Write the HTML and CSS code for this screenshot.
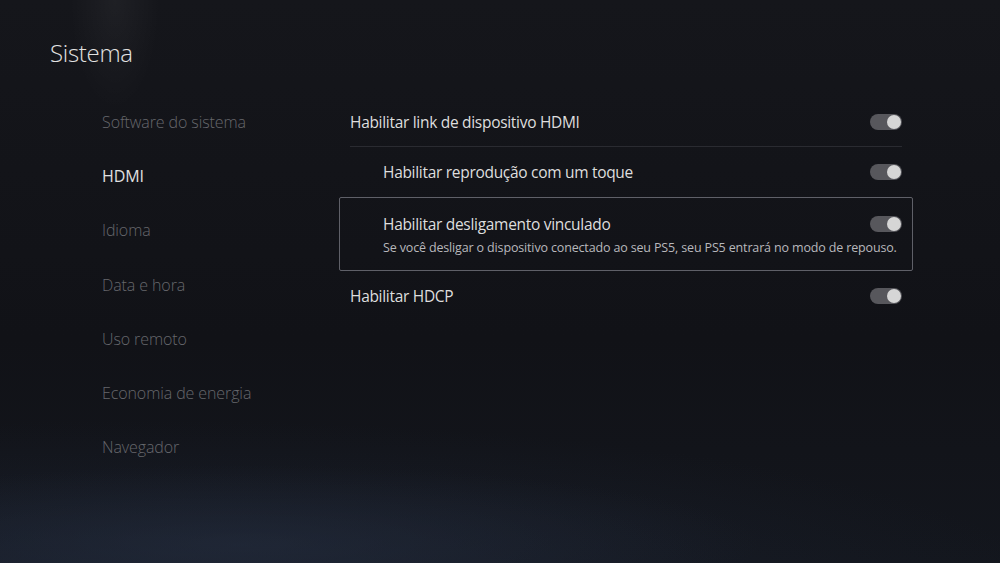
FILE: index.html
```html
<!DOCTYPE html>
<html lang="pt">
<head>
  <meta charset="UTF-8">
  <title>Sistema - HDMI</title>
  <link rel="stylesheet" href="styles.css">
</head>
<body>

  <div class="screen">
    <h1 class="page-title">Sistema</h1>

    <div class="layout">
      <!-- Menu lateral -->
      <nav class="side-menu">
        <a href="#">Software do sistema</a>
        <a href="#" class="active">HDMI</a>
        <a href="#">Idioma</a>
        <a href="#">Data e hora</a>
        <a href="#">Uso remoto</a>
        <a href="#">Economia de energia</a>
        <a href="#">Navegador</a>
      </nav>

      <!-- Opções HDMI -->
      <section class="options">
        <div class="option divider">
          <span class="label">Habilitar link de dispositivo HDMI</span>
          <span class="toggle on"></span>
        </div>
        <div class="option sub">
          <span class="label">Habilitar reprodução com um toque</span>
          <span class="toggle on"></span>
        </div>
        <div class="option sub focused">
          <div class="option-row">
            <span class="label">Habilitar desligamento vinculado</span>
            <span class="toggle on"></span>
          </div>
          <span class="hint">Se você desligar o dispositivo conectado ao seu PS5, seu PS5 entrará no modo de repouso.</span>
        </div>
        <div class="option">
          <span class="label">Habilitar HDCP</span>
          <span class="toggle on"></span>
        </div>
      </section>
    </div>
  </div>

</body>
</html>
```

FILE: styles.css
```css
/* Global */
html, body {
  margin: 0;
  padding: 0;
  height: 100%;
}
body {
  font-family: 'Open Sans', 'Noto Sans', sans-serif;
  color: #dcdcdc;
  background-color: #121318;
  background-image:
    radial-gradient(ellipse 45px 110px at 115px 0px, rgba(255,255,255,0.045), rgba(255,255,255,0) 100%),
    radial-gradient(ellipse 520px 80px at 240px 545px, rgba(40,50,70,0.45), rgba(40,50,70,0) 100%),
    radial-gradient(ellipse 900px 170px at 150px 590px, rgba(30,38,54,0.6), rgba(30,38,54,0) 100%),
    linear-gradient(180deg, #15161b 0%, #111217 60%, #13161d 100%);
  overflow: hidden;
}
a {
  text-decoration: none;
  color: inherit;
}

.screen {
  padding: 36px 0 0 50px;
}
.page-title {
  margin: 0;
  font-size: 24px;
  font-weight: 300;
  line-height: 34px;
  letter-spacing: -0.3px;
  color: #e2e2e2;
}

/* Layout */
.layout {
  display: grid;
  grid-template-columns: 237px 574px;
  padding-left: 52px;
  margin-top: 25px;
}

/* Side menu */
.side-menu {
  display: flex;
  flex-direction: column;
}
.side-menu a {
  height: 54.2px;
  line-height: 54.2px;
  font-size: 16px;
  font-weight: 300;
  letter-spacing: -0.1px;
  color: #66676c;
}
.side-menu a.active {
  color: #e0e0e0;
  font-weight: 400;
}

/* Options */
.options {
  display: flex;
  flex-direction: column;
  padding-top: 1px;
}
.option {
  display: flex;
  align-items: center;
  justify-content: space-between;
  height: 50px;
  padding: 0 10px;
  font-size: 15.5px;
  letter-spacing: -0.3px;
  border: 1.5px solid transparent;
  box-sizing: border-box;
}
.option.divider {
  height: 51px;
  border-bottom: none;
  background: linear-gradient(#2a2b31, #2a2b31) no-repeat 10px 100% / calc(100% - 20px) 1px;
}
.option.sub {
  padding-left: 43px;
}
.option.focused {
  height: 74px;
  border: 1.5px solid #5f6068;
  border-radius: 2px;
  flex-direction: column;
  align-items: stretch;
  justify-content: flex-start;
  padding-top: 15px;
}
.option-row {
  display: flex;
  align-items: center;
  justify-content: space-between;
}
.label {
  color: #dedede;
}
.hint {
  margin-top: 4px;
  font-size: 12.5px;
  letter-spacing: -0.15px;
  white-space: nowrap;
  color: #b8b8bc;
}

/* Toggle */
.toggle {
  position: relative;
  width: 32px;
  height: 16px;
  border-radius: 8px;
  background: #57575c;
  flex-shrink: 0;
}
.toggle.on::after {
  content: "";
  position: absolute;
  right: 1px;
  top: 1px;
  width: 14px;
  height: 14px;
  border-radius: 50%;
  background: #d6d6d6;
}
```
